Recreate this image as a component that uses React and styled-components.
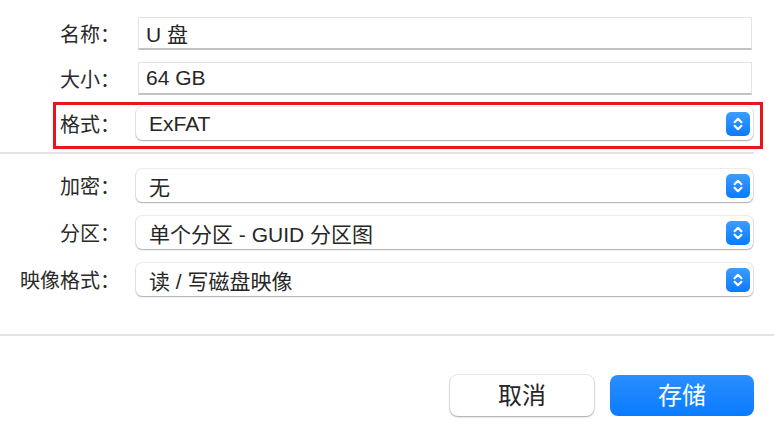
import React from "react";
import styled, { createGlobalStyle } from "styled-components";

const GlobalStyle = createGlobalStyle`
  html, body {
    margin: 0;
    padding: 0;
    background: #ffffff;
  }
  body {
    font-family: "Liberation Sans", "Noto Sans CJK SC", sans-serif;
    color: #262626;
  }
`;

const fields = [
  { label: "名称：", value: "U 盘", kind: "text" },
  { label: "大小：", value: "64 GB", kind: "text" },
  { label: "格式：", value: "ExFAT", kind: "select", marked: true },
];

const options = [
  { label: "加密：", value: "无" },
  { label: "分区：", value: "单个分区 - GUID 分区图" },
  { label: "映像格式：", value: "读 / 写磁盘映像" },
];

const Stepper = () => (
  <StepBox>
    <svg width="24" height="24" viewBox="0 0 24 24" fill="none">
      <path d="M8.6 10.2 L12 6.8 L15.4 10.2" stroke="#fff" strokeWidth="2.2" strokeLinecap="round" strokeLinejoin="round" />
      <path d="M8.6 13.8 L12 17.2 L15.4 13.8" stroke="#fff" strokeWidth="2.2" strokeLinecap="round" strokeLinejoin="round" />
    </svg>
  </StepBox>
);

const Row = ({ item }) => (
  <FormRow marked={item.marked}>
    <Label>{item.label}</Label>
    {item.kind === "text" ? (
      <TextField>{item.value}</TextField>
    ) : (
      <Popup>
        <span>{item.value}</span>
        <Stepper />
      </Popup>
    )}
  </FormRow>
);

const App = () => {
  return (
    <>
      <GlobalStyle />
      <Window>
        <TopSection>
          {fields.map((f) => (
            <Row key={f.label} item={f} />
          ))}
        </TopSection>
        <Divider />
        <MiddleSection>
          {options.map((o) => (
            <Row key={o.label} item={{ ...o, kind: "select" }} />
          ))}
        </MiddleSection>
        <Divider full />
        <Footer>
          <Button>取消</Button>
          <Button primary>存储</Button>
        </Footer>
      </Window>
    </>
  );
};

const Window = styled.div`
  width: 774px;
  height: 438px;
  display: flex;
  flex-direction: column;
  overflow: hidden;
`;

const TopSection = styled.div`
  display: flex;
  flex-direction: column;
  gap: 12px;
  padding: 17px 21px 12px 0;
`;

const MiddleSection = styled.div`
  display: flex;
  flex-direction: column;
  gap: 14px;
  padding: 15px 21px 38px 0;
`;

const FormRow = styled.div`
  position: relative;
  display: grid;
  grid-template-columns: 120px 1fr;
  column-gap: 16px;
  align-items: center;

  &::after {
    content: "";
    display: ${({ marked }) => (marked ? "block" : "none")};
    position: absolute;
    top: -5px;
    bottom: -9px;
    left: 53px;
    right: -10px;
    border: 3px solid #e5161c;
    pointer-events: none;
  }
`;

const Label = styled.div`
  text-align: right;
  font-family: "Noto Sans CJK SC", sans-serif;
  font-size: 20px;
  color: #2a2a2a;
  line-height: 1;
  white-space: nowrap;
`;

const TextField = styled.div`
  height: 33px;
  box-sizing: border-box;
  margin: 0 1px 0 2px;
  padding: 0 7px;
  display: flex;
  align-items: center;
  font-size: 21px;
  background: #fff;
  border: 1px solid #e4e4e4;
  border-bottom: 2px solid #c2c2c2;
`;

const Popup = styled.div`
  height: 33px;
  box-sizing: border-box;
  padding: 0 3px 0 13px;
  display: flex;
  align-items: center;
  justify-content: space-between;
  font-size: 21px;
  background: #fff;
  border-radius: 6px;
  box-shadow: 0 0 0 1px rgba(0, 0, 0, 0.07), 0 1px 1.5px rgba(0, 0, 0, 0.28);

  span {
    white-space: pre;
  }
`;

const StepBox = styled.div`
  width: 24px;
  height: 24px;
  border-radius: 5px;
  background: linear-gradient(#3d9dff, #0a7aff);
  display: flex;
  align-items: center;
  justify-content: center;
`;

const Divider = styled.div`
  height: 2px;
  background: #e3e3e3;
  width: ${({ full }) => (full ? "100%" : "754px")};
  flex-shrink: 0;
`;

const Footer = styled.div`
  display: flex;
  justify-content: flex-end;
  gap: 16px;
  padding: 39px 20px 0 0;
`;

const Button = styled.div`
  width: 144px;
  height: 41px;
  box-sizing: border-box;
  padding-bottom: 3px;
  display: flex;
  align-items: center;
  justify-content: center;
  border-radius: 8px;
  font-family: "Noto Sans CJK SC", sans-serif;
  font-size: 24px;
  line-height: 1;
  color: ${({ primary }) => (primary ? "#fff" : "#262626")};
  background: ${({ primary }) =>
    primary ? "linear-gradient(#2a8fff, #0a7bff)" : "#fff"};
  box-shadow: ${({ primary }) =>
    primary
      ? "none"
      : "0 0 0 1px rgba(0, 0, 0, 0.08), 0 1px 2px rgba(0, 0, 0, 0.3)"};
`;

export default App;
